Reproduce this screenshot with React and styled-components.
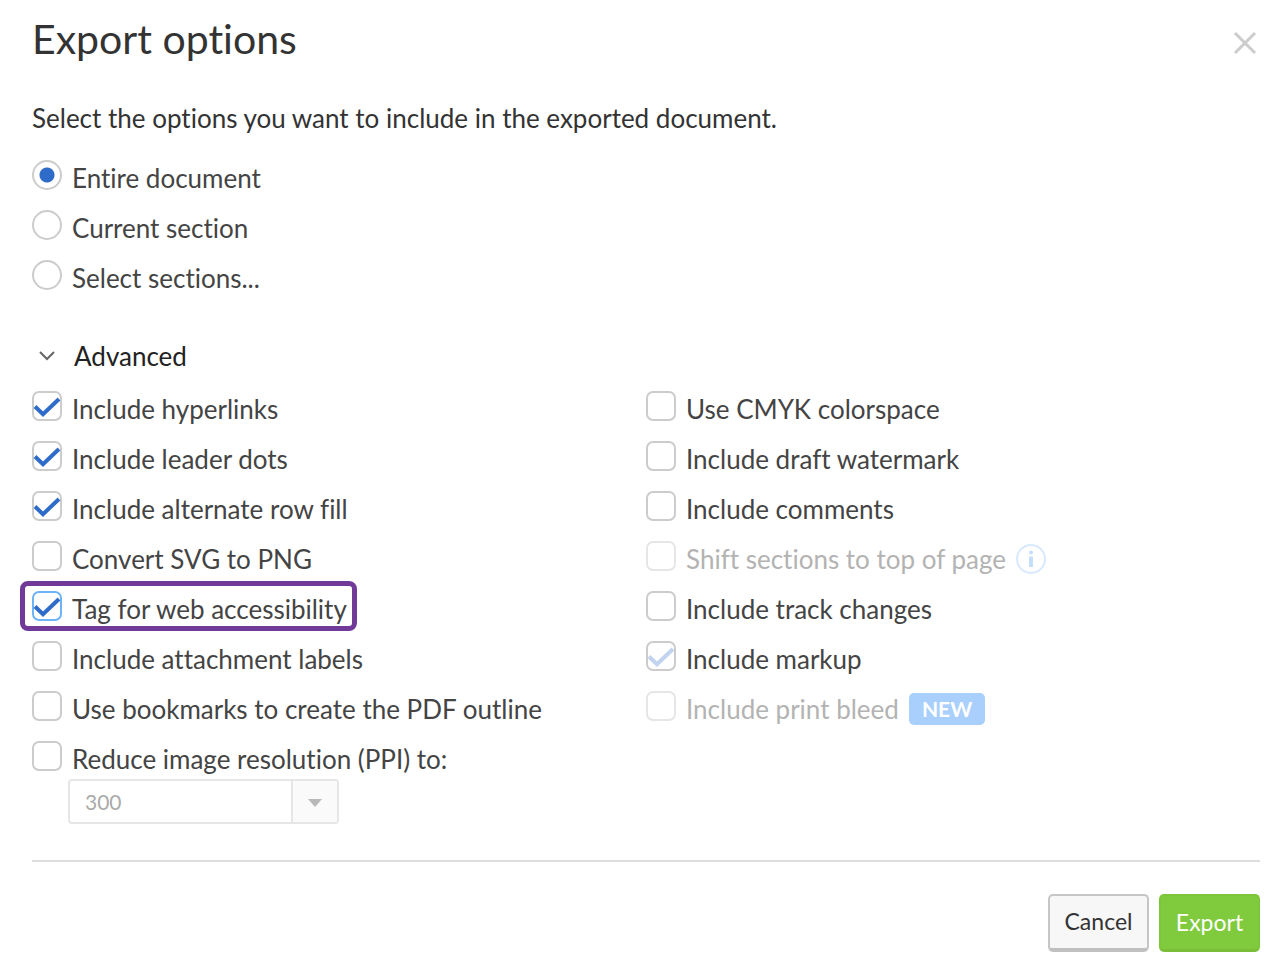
import React, { useState } from "react";
import styled, { createGlobalStyle, css } from "styled-components";

const GlobalStyle = createGlobalStyle`
  * {
    box-sizing: border-box;
  }

  body {
    margin: 0;
    background-color: #fff;
    color: #333;
    font-family: Lato, "Liberation Sans", sans-serif;
    font-size: 26px;
    font-variant-ligatures: no-common-ligatures;
  }

  button, select, input {
    font-family: inherit;
    margin: 0;
  }
`;

const Dialog = styled.form`
  padding: 14px 26px 14px 32px;
`;

const Header = styled.header`
  display: flex;
  justify-content: space-between;
  align-items: flex-start;

  h1 {
    margin: 0;
    font-size: 41px;
    font-weight: 400;
    line-height: 50px;
  }
`;

const CloseButton = styled.button`
  display: flex;
  margin-top: 14px;
  padding: 0;
  border: none;
  background: none;
  cursor: pointer;
`;

const Intro = styled.p`
  margin: 38px 0 26px;
  line-height: 32px;
`;

const OptionList = styled.div`
  display: flex;
  flex-direction: column;
  align-items: flex-start;
  gap: 14px;
`;

const OptionRow = styled.label`
  position: relative;
  display: flex;
  align-items: flex-start;
  gap: 10px;
  line-height: 36px;
  color: ${(props) => (props.$faded ? "#b3b3b3" : "#444")};

  ${(props) =>
    props.$highlighted &&
    css`
      &::after {
        content: "";
        position: absolute;
        inset: -10px -10px -4px -12px;
        border: 5px solid #713a98;
        border-radius: 8px;
        pointer-events: none;
      }
    `}
`;

const Radio = styled.input`
  appearance: none;
  width: 30px;
  height: 30px;
  border: 2px solid #ccc;
  border-radius: 50%;
  background-color: #fff;

  &:checked {
    background-image: radial-gradient(circle, #2f6cc9 7px, #fff 8px);
  }
`;

const CheckWrapper = styled.span`
  display: grid;
  height: 30px;

  input,
  svg {
    grid-area: 1 / 1;
  }

  svg {
    pointer-events: none;
  }
`;

const CheckInput = styled.input`
  appearance: none;
  width: 30px;
  height: 30px;
  border: 2px solid
    ${(props) =>
      props.$highlighted ? "#6db3f8" : props.$faded ? "#e6e6e6" : "#ccc"};
  border-radius: 7px;
  background-color: #fff;
`;

const AdvancedToggle = styled.button`
  display: flex;
  align-items: center;
  gap: 19px;
  margin: 44px 0 19px;
  padding: 0 0 0 7px;
  border: none;
  background: none;
  color: #222;
  font-size: 26px;
  line-height: 32px;
  cursor: pointer;
`;

const Columns = styled.div`
  display: grid;
  grid-template-columns: 1fr 1fr;
`;

const InfoIcon = styled.svg`
  align-self: center;
`;

const Badge = styled.span`
  align-self: center;
  padding: 0 13px;
  border-radius: 5px;
  background-color: #a9cffc;
  color: #fff;
  font-size: 21px;
  font-weight: 700;
  line-height: 32px;
`;

const SelectBox = styled.div`
  display: grid;
  grid-template-columns: 1fr 46px;
  width: 271px;
  height: 45px;
  margin: 2px 0 0 36px;
  border: 2px solid #e6e6e6;
  border-radius: 4px;

  select {
    grid-area: 1 / 1 / 2 / 3;
    appearance: none;
    padding: 0 60px 0 15px;
    border: none;
    background: none;
    color: #aaa;
    font-size: 21px;
    opacity: 1;
  }
`;

const SelectArrow = styled.span`
  grid-area: 1 / 2;
  display: flex;
  align-items: center;
  justify-content: center;
  padding-top: 2px;
  border-left: 2px solid #e6e6e6;
  background-color: #fafafa;
  pointer-events: none;
`;

const Footer = styled.footer`
  display: flex;
  justify-content: flex-end;
  gap: 10px;
  margin-top: 36px;
  padding-top: 32px;
  border-top: 2px solid #ddd;
`;

const FooterButton = styled.button`
  min-width: 101px;
  height: 58px;
  padding: 0 14px 2px;
  border: 2px solid ${(props) => (props.$primary ? "#7dc63c" : "#c6c6c6")};
  border-bottom: ${(props) =>
    props.$primary ? "3px solid #79bd39" : "4px solid #c0c0c0"};
  border-radius: 5px;
  background-color: ${(props) => (props.$primary ? "#80ca3d" : "#f7f7f7")};
  color: ${(props) => (props.$primary ? "#fff" : "#333")};
  font-size: 23px;
  cursor: pointer;
`;

const scopes = ["Entire document", "Current section", "Select sections..."];

const leftOptions = [
  { label: "Include hyperlinks", checked: true },
  { label: "Include leader dots", checked: true },
  { label: "Include alternate row fill", checked: true },
  { label: "Convert SVG to PNG" },
  { label: "Tag for web accessibility", checked: true, highlighted: true },
  { label: "Include attachment labels" },
  { label: "Use bookmarks to create the PDF outline" },
  { label: "Reduce image resolution (PPI) to:" },
];

const rightOptions = [
  { label: "Use CMYK colorspace" },
  { label: "Include draft watermark" },
  { label: "Include comments" },
  { label: "Shift sections to top of page", faded: true, info: true },
  { label: "Include track changes" },
  { label: "Include markup", checked: true, locked: true },
  { label: "Include print bleed", faded: true, badge: "NEW" },
];

function CheckOption({ option }) {
  const [checked, setChecked] = useState(Boolean(option.checked));

  return (
    <OptionRow $faded={option.faded} $highlighted={option.highlighted}>
      <CheckWrapper>
        <CheckInput
          type="checkbox"
          checked={checked}
          disabled={option.faded || option.locked}
          onChange={(e) => setChecked(e.target.checked)}
          $faded={option.faded}
          $highlighted={option.highlighted}
        />
        {checked && (
          <svg width="30" height="30" viewBox="0 0 30 30" fill="none">
            <path
              d="M3 15.5 L11 23.2 L27 8"
              stroke={option.locked ? "#c1d3ef" : "#2f6cc9"}
              strokeWidth="4"
            />
          </svg>
        )}
      </CheckWrapper>
      <span>{option.label}</span>
      {option.info && (
        <InfoIcon width="30" height="32" viewBox="0 0 30 32" fill="none">
          <circle cx="15" cy="16" r="14" stroke="#d8e9fd" strokeWidth="2" />
          <circle cx="15" cy="9.5" r="2" fill="#c4defc" />
          <path d="M15 13.5 V24" stroke="#c4defc" strokeWidth="4" />
        </InfoIcon>
      )}
      {option.badge && <Badge>{option.badge}</Badge>}
    </OptionRow>
  );
}

export default function App() {
  const [scope, setScope] = useState(scopes[0]);
  const [open, setOpen] = useState(true);

  return (
    <>
      <GlobalStyle />
      <Dialog onSubmit={(e) => e.preventDefault()}>
        <Header>
          <h1>Export options</h1>
          <CloseButton type="button" aria-label="Close">
            <svg width="30" height="30" viewBox="0 0 30 30" fill="none">
              <path
                d="M5 5 L25 25 M25 5 L5 25"
                stroke="#ccc"
                strokeWidth="3"
              />
            </svg>
          </CloseButton>
        </Header>

        <Intro>Select the options you want to include in the exported document.</Intro>

        <OptionList>
          {scopes.map((name) => (
            <OptionRow key={name}>
              <Radio
                type="radio"
                name="scope"
                checked={scope === name}
                onChange={() => setScope(name)}
              />
              <span>{name}</span>
            </OptionRow>
          ))}
        </OptionList>

        <AdvancedToggle
          type="button"
          aria-expanded={open}
          onClick={() => setOpen(!open)}
        >
          <svg width="16" height="16" viewBox="0 0 16 16" fill="none">
            <path d="M1 4 L8 11 L15 4" stroke="#666" strokeWidth="2" />
          </svg>
          <span>Advanced</span>
        </AdvancedToggle>

        {open && (
          <Columns>
            <div>
              <OptionList>
                {leftOptions.map((option) => (
                  <CheckOption key={option.label} option={option} />
                ))}
              </OptionList>
              <SelectBox>
                <select aria-label="Image resolution" disabled>
                  <option>300</option>
                </select>
                <SelectArrow>
                  <svg width="14" height="8" viewBox="0 0 14 8">
                    <path d="M0 0 H14 L7 8 Z" fill="#b8b8b8" />
                  </svg>
                </SelectArrow>
              </SelectBox>
            </div>
            <OptionList>
              {rightOptions.map((option) => (
                <CheckOption key={option.label} option={option} />
              ))}
            </OptionList>
          </Columns>
        )}

        <Footer>
          <FooterButton type="button">Cancel</FooterButton>
          <FooterButton type="submit" $primary>
            Export
          </FooterButton>
        </Footer>
      </Dialog>
    </>
  );
}
